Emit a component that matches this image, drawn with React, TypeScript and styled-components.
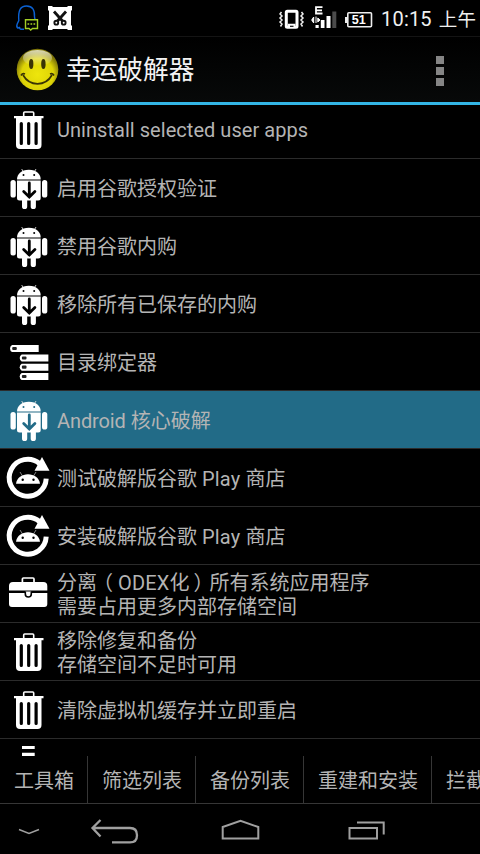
import React from "react";
import styled, { createGlobalStyle } from "styled-components";

const GlobalStyle = createGlobalStyle`
  * { box-sizing: border-box; }
  html, body { margin: 0; background: #000; }
  body { overflow: hidden; }
`;

const Screen = styled.div`
  width: 480px;
  height: 854px;
  display: flex;
  flex-direction: column;
  overflow: hidden;
  background: #000;
  color: #b4b4b4;
  font-family: Roboto, "Noto Sans CJK SC", sans-serif;
`;

const StatusBar = styled.header`
  height: 36px;
  flex: none;
  display: flex;
  align-items: center;
  justify-content: space-between;
`;

const StatusIcons = styled.svg`
  display: block;
  flex: none;
`;

const StatusRight = styled.div`
  display: flex;
  align-items: center;
  width: 204px;
`;

const Clock = styled.span`
  width: 100px;
  padding: 3px 0 0 5px;
  font-size: 20px;
  line-height: 24px;
  letter-spacing: 0.2px;
  white-space: nowrap;
  color: #f0f0f0;
`;

const Meridiem = styled.span`
  font-size: 18.5px;
  margin-left: 7px;
`;

const ActionBar = styled.div`
  height: 69px;
  flex: none;
  display: flex;
  align-items: center;
  padding: 0 36px 0 16px;
  border-top: 1px solid #141414;
  border-bottom: 3px solid #33b5e5;
  background: linear-gradient(#000, #070909);
`;

const Title = styled.h1`
  flex: 1;
  margin: 0 0 0 7px;
  font-size: 25.7px;
  line-height: 32px;
  font-weight: 400;
  color: #f3f3f3;
`;

const Overflow = styled.div`
  display: grid;
  gap: 3px;
  padding-top: 3px;
`;

const OverflowDot = styled.i`
  width: 8px;
  height: 8px;
  background: #858585;
`;

const List = styled.main`
  height: 651px;
  flex: none;
  display: flex;
  flex-direction: column;
  overflow: hidden;
`;

const Row = styled.div<{ $selected?: boolean; $first?: boolean }>`
  height: 58px;
  flex: none;
  display: flex;
  align-items: center;
  margin-top: ${(p) => (p.$first ? "-4px" : "0")};
  border-bottom: 1px solid #2b2b2b;
  background: ${(p) => (p.$selected ? "#226b87" : "#000")};
`;

const RowIcon = styled.svg`
  width: 57px;
  height: 57px;
  flex: none;
  display: block;
`;

const RowText = styled.div<{ $drop: number }>`
  padding-top: ${(p) => p.$drop}px;
  font-size: 20px;
  line-height: 24px;
  white-space: nowrap;
`;

const Latin = styled.span<{ $track: number }>`
  letter-spacing: ${(p) => p.$track}px;
`;

const Paren = styled.span<{ $side: "open" | "close" }>`
  font-family: "Noto Sans CJK SC", sans-serif;
  line-height: 1;
  font-feature-settings: "halt" 1;
  margin: ${(p) => (p.$side === "open" ? "0 5px 0 6px" : "0 6px 0 4px")};
`;

const Tabs = styled.nav`
  height: 48px;
  flex: none;
  display: flex;
  overflow: hidden;
  border-bottom: 1px solid #363636;
`;

const Tab = styled.div`
  flex: none;
  display: flex;
  align-items: center;
  padding: 3px 13px 0 14px;
  border-right: 1px solid #363636;
  font-size: 20px;
  line-height: 24px;
  white-space: nowrap;
`;

const NavBar = styled.footer`
  height: 50px;
  flex: none;
`;

const Trash = () => (
  <g>
    <path d="M23.7 15v-3q0-1 1-1h8q1 0 1 1v3" fill="none" stroke="#fff" strokeWidth="1.6" />
    <path d="M14 15h29.500v2.300h-2V44q0 4-4 4H20q-4 0-4-4V17.300h-2z" fill="#fff" />
    <path d="M21.300 22.500v20M28.700 22.500v20M36.100 22.500v20" stroke="#000" strokeWidth="3.200" strokeLinecap="round" />
  </g>
);

const Robot = ({ hole }: { hole: string }) => (
  <g>
    <path d="M21.700 10l2.300 4M36 10l-2.300 4" stroke="#ddd" strokeWidth="0.9" />
    <path d="M17 20.500c0-5 4-9.700 11.900-9.700s11.800 4.700 11.800 9.700z" fill="#fff" />
    <circle cx="23.5" cy="16" r="1" fill={hole} />
    <circle cx="34.2" cy="16" r="1" fill={hole} />
    <path d="M17 21.500h23.700V39q0 2.500-2.500 2.500h-2.300v6q0 2.600-2.600 2.600t-2.600-2.600v-6h-3.500v6q0 2.600-2.600 2.600T22 47.500v-6h-2.500Q17 41.500 17 39z" fill="#fff" />
    <rect x="10.500" y="21" width="5.300" height="17.500" rx="2.600" fill="#fff" />
    <rect x="42" y="21" width="5.300" height="17.500" rx="2.600" fill="#fff" />
    <path d="M29.3 24v14M23.700 32.500l5.600 5.500 5.600-5.500" fill="none" stroke={hole} strokeWidth="2.800" strokeLinecap="round" />
  </g>
);

const Binder = () => (
  <g>
    {[
      [10, 12],
      [19.7, 21.5],
      [19.7, 30.7],
      [19.7, 40],
    ].map(([x, y]) => (
      <g key={y}>
        <path d={`M${x + 2} ${y}h26.700v7h-26.700q-2-1-2-3.500t2-3.500z`} fill="#fff" />
        <rect x={x + 2.2} y={y + 1.9} width="4.6" height="3.2" rx="1" fill="#222" />
      </g>
    ))}
  </g>
);

const Reload = () => (
  <g>
    <path d="M39.5 14.5A18.5 18.5 0 1 0 46.200 29.700" fill="none" stroke="#fff" strokeWidth="5" />
    <path d="M42 8l7.500 13.700H34.500z" fill="#fff" />
    <path d="M20 23l2.500 4M36 23l-2.500 4" stroke="#bbb" strokeWidth="0.7" />
    <path d="M16 34.700c.8-6 6-9.500 12-9.500s11.200 3.500 12 9.500z" fill="#fff" />
    <circle cx="22.7" cy="30.8" r="1.2" fill="#000" />
    <circle cx="33.5" cy="30.8" r="1.2" fill="#000" />
  </g>
);

const Briefcase = () => (
  <g>
    <path d="M22.4 17v-3q0-1 1-1H33q1 0 1 1v3" fill="none" stroke="#fff" strokeWidth="1.7" />
    <path d="M13 17h30.300q4 0 4 4v4.500H9V21q0-4 4-4zM9 28h38.300v11q0 3-3 3H12q-3 0-3-3z" fill="#fff" />
    <path d="M25.300 26.500v2.500q0 3 3 3t3-3v-2.500" fill="#fff" stroke="#000" strokeWidth="1.6" />
  </g>
);

const Bars = () => (
  <path d="M22 7h12.700v3H22zM22 13.700h12.700V20H22z" fill="#fff" />
);

type Kind = "trash" | "robot" | "binder" | "reload" | "briefcase";

const icons: Record<Kind, (hole: string) => React.ReactNode> = {
  trash: () => <Trash />,
  robot: (hole) => <Robot hole={hole} />,
  binder: () => <Binder />,
  reload: () => <Reload />,
  briefcase: () => <Briefcase />,
};

const rows: { kind: Kind; lines: React.ReactNode[]; selected?: boolean }[] = [
  { kind: "trash", lines: [<Latin $track={0.04}>Uninstall selected user apps</Latin>] },
  { kind: "robot", lines: ["启用谷歌授权验证"] },
  { kind: "robot", lines: ["禁用谷歌内购"] },
  { kind: "robot", lines: ["移除所有已保存的内购"] },
  { kind: "binder", lines: ["目录绑定器"] },
  {
    kind: "robot",
    lines: [
      <>
        <Latin $track={-0.1}>Android</Latin> 核心破解
      </>,
    ],
    selected: true,
  },
  {
    kind: "reload",
    lines: [
      <>
        测试破解版谷歌 <Latin $track={0.2}>Play</Latin> 商店
      </>,
    ],
  },
  {
    kind: "reload",
    lines: [
      <>
        安装破解版谷歌 <Latin $track={0.2}>Play</Latin> 商店
      </>,
    ],
  },
  {
    kind: "briefcase",
    lines: [
      <>
        分离<Paren $side="open">（</Paren>
        <Latin $track={0.2}>ODEX</Latin>化<Paren $side="close">）</Paren>所有系统应用程序
      </>,
      "需要占用更多内部存储空间",
    ],
  },
  { kind: "trash", lines: ["移除修复和备份", "存储空间不足时可用"] },
  { kind: "trash", lines: ["清除虚拟机缓存并立即重启"] },
];

const tabs = ["工具箱", "筛选列表", "备份列表", "重建和安装", "拦截"];

const Smiley = () => (
  <svg width="43" height="43" viewBox="0 0 43 43">
    <defs>
      <radialGradient id="face" cx="50%" cy="62%" r="55%">
        <stop offset="0" stopColor="#eee60c" />
        <stop offset="0.7" stopColor="#ddd306" />
        <stop offset="1" stopColor="#7d7408" />
      </radialGradient>
      <linearGradient id="shine" x1="0" y1="0" x2="0" y2="1">
        <stop offset="0" stopColor="#fffff0" stopOpacity="0.75" />
        <stop offset="1" stopColor="#fff" stopOpacity="0" />
      </linearGradient>
    </defs>
    <circle cx="21.5" cy="21.5" r="20.8" fill="url(#face)" />
    <ellipse cx="21.5" cy="10" rx="14.5" ry="8" fill="url(#shine)" />
    <ellipse cx="15.2" cy="16" rx="2.2" ry="5" fill="#3a3405" />
    <ellipse cx="27.4" cy="16" rx="2.2" ry="5" fill="#3a3405" />
    <path d="M7 27q5 8.800 14.500 8.800T36 27" fill="none" stroke="#3a3405" strokeWidth="1.700" />
    <path d="M5 27.500q1.500-2.500 4-1.500M38 27.500q-1.500-2.500-4-1.500" fill="none" stroke="#3a3405" strokeWidth="1.700" />
  </svg>
);

const App = () => (
  <>
    <GlobalStyle />
    <Screen>
      <StatusBar>
        <StatusIcons width="80" height="36" fill="none">
          <path d="M24 29.300h-3q-1.800-.6-1.300-2.300-.7.700-1.700 1.200-2-1.200-.8-4.200l1.600-3.500C18 10 20.500 6 26.500 6s8.500 4 8 11l.5 2.500" stroke="#0b62d4" strokeWidth="1.400" />
          <path d="M25.500 19.700h12v8.800h-5l-1.800 1.500-1.700-1.500h-3.500z" stroke="#a5cf25" strokeWidth="1.400" />
          <path d="M27.500 24h1.700M30.500 24h1.700M33.500 24h1.700" stroke="#a5cf25" strokeWidth="1.500" />
          <path d="M48 6h4l1 1h14l1-1h4v4l-1 1v14l1 1v4h-4l-1-1H53l-1 1h-4v-4l1-1V11l-1-1z" fill="#fff" />
          <path d="M54 11.500l8.500 9.500M66 11.500l-8.500 9.500" stroke="#111" strokeWidth="2.800" />
          <circle cx="56.300" cy="22.700" r="1.900" stroke="#111" strokeWidth="1.900" />
          <circle cx="63.700" cy="22.700" r="1.900" stroke="#111" strokeWidth="1.900" />
        </StatusIcons>
        <StatusRight>
          <StatusIcons width="100" height="36" viewBox="276 0 100 36" fill="none">
            <rect x="286.300" y="11.300" width="10.700" height="16" rx="1" stroke="#fff" strokeWidth="3" />
            <path d="M288 25.500h7.500" stroke="#fff" strokeWidth="3.500" />
            <path d="M290 26.300h3.500" stroke="#111" strokeWidth="1.200" />
            <path d="M281.500 12l-1.500 2 2 2-2 2 2 2-2 2 2 2-1.500 2.500M301.500 12l1.500 2-2 2 2 2-2 2 2 2-2 2 1.500 2.500" stroke="#eee" strokeWidth="1.500" />
            <path d="M322.500 7.200H316v6.300h6.500M316 10.300h6" stroke="#fff" strokeWidth="1.800" />
            <path d="M315.500 25v3h3.200v-3zM320.800 28v-8h3.700v8zM326.500 28V16h4v12z" fill="#fff" />
            <path d="M332.300 11.500h4V28h-4z" fill="#4b4b4b" />
            <path d="M313.700 17l-2 3 2 3zM316 16.500v6.500M317.800 18l2.200 2-2.200 2z" fill="#fff" stroke="#fff" strokeWidth="1" />
            <rect x="347.800" y="12.800" width="23.700" height="14" rx="1" stroke="#eee" strokeWidth="1.600" />
            <path d="M346 17v6" stroke="#eee" strokeWidth="2" />
            <text x="358.800" y="24" fill="#fff" fontSize="12" fontWeight="700" textAnchor="middle" textLength="14" lengthAdjust="spacingAndGlyphs" fontFamily="Liberation Sans">51</text>
          </StatusIcons>
          <Clock>
            10:15<Meridiem>上午</Meridiem>
          </Clock>
        </StatusRight>
      </StatusBar>
      <ActionBar>
        <Smiley />
        <Title>幸运破解器</Title>
        <Overflow>
          <OverflowDot />
          <OverflowDot />
          <OverflowDot />
        </Overflow>
      </ActionBar>
      <List>
        {rows.map((row, i) => (
          <Row key={i} $first={i === 0} $selected={row.selected}>
            <RowIcon viewBox="0 0 57 57">{icons[row.kind](row.selected ? "#226b87" : "#000")}</RowIcon>
            <RowText $drop={i === 0 ? 0 : 2}>
              {row.lines.map((line, n) => (
                <div key={n}>{line}</div>
              ))}
            </RowText>
          </Row>
        ))}
        <Row>
          <RowIcon viewBox="0 0 57 57">
            <Bars />
          </RowIcon>
        </Row>
      </List>
      <Tabs>
        {tabs.map((label) => (
          <Tab key={label}>{label}</Tab>
        ))}
      </Tabs>
      <NavBar>
        <svg width="480" height="50" viewBox="0 804 480 50" fill="none" stroke="#a0a0a0" strokeWidth="2">
          <path d="M19 829.500l10 4 10-4" strokeWidth="1.5" />
          <path d="M100.500 820l-8 8 8 8.500M93 828h37q7 0 7 7.200t-7 7.200h-18" strokeWidth="2.300" />
          <path d="M222.700 838.500v-11.500l17.800-6.200 17.800 6.200v11.500z" />
          <path d="M349.500 828h27.500v10.500h-27.500zM357 822.500h26.700V834.500" />
        </svg>
      </NavBar>
    </Screen>
  </>
);

export default App;
